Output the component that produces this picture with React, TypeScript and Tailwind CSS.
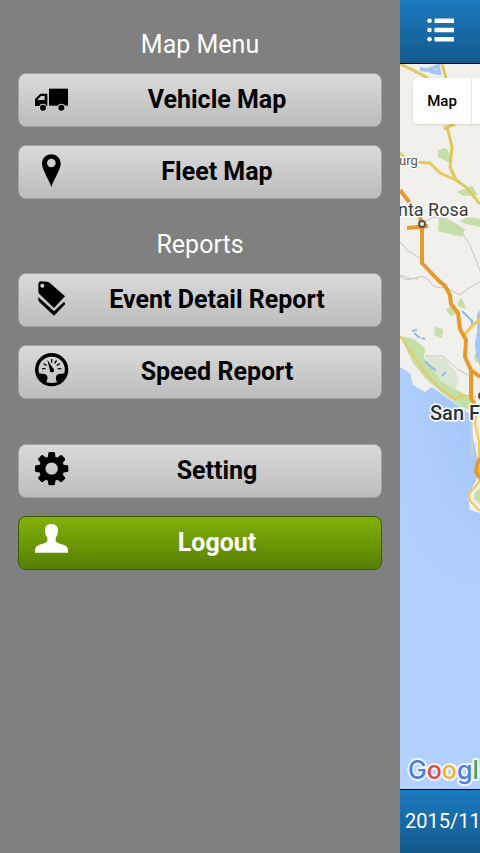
import React from 'react';

const GEAR_TEETH = [0, 45, 90, 135, 180, 225, 270, 315];
const GAUGE_TICKS = [-90, -58, 0, 30, 58, 90];

const TruckIcon = () => (
  <>
    <rect x="42" y="23" width="57" height="51" />
    <path fillRule="evenodd" d="M0 75V54L16 38H37V75ZM7 57L18 45H29V57Z" />
    <circle cx="24" cy="80" r="12" fill="#cbcbcb" />
    <circle cx="79" cy="80" r="12" fill="#cbcbcb" />
    <circle cx="24" cy="80" r="9" />
    <circle cx="79" cy="80" r="9" />
  </>
);

const PinIcon = () => (
  <path
    fillRule="evenodd"
    d="M49 4C33 4 21 16 21 32C21 49 40 76 49 102C58 76 77 49 77 32C77 16 65 4 49 4ZM49 17A13 13 0 1 1 49 43A13 13 0 1 1 49 17Z"
  />
);

const TagsIcon = () => (
  <>
    <path fillRule="evenodd" d="M10 10Q10 2 18 1L37 2Q41 2 44 5L90 46L57 81L13 39Q10 36 10 32ZM22 8A6 6 0 1 0 22 20A6 6 0 1 0 22 8Z" />
    <path d="M10 48L57 91L87 62L91 69L57 104L13 63Q10 60 10 56Z" />
  </>
);

const GaugeIcon = () => (
  <>
    <path fillRule="evenodd" d="M50 0A50 50 0 1 1 50 100A50 50 0 1 1 50 0ZM50 11A39 39 0 0 0 12 61Q20 63 29 63Q39 66 37 79L34 88Q50 92 66 88L63 79Q61 66 71 63Q80 63 88 61A39 39 0 0 0 50 11Z" />
    {GAUGE_TICKS.map((a) => (
      <rect key={a} x="48" y="18" width="4" height="11" rx="1" transform={`rotate(${a} 50 47)`} />
    ))}
    <path d="M37 20L45 53A6 6 0 0 0 57 50Z" />
    <circle cx="51" cy="52" r="6" />
  </>
);

const GearIcon = () => (
  <>
    <circle cx="50" cy="50" r="28" fill="none" stroke="currentColor" strokeWidth="19" />
    {GEAR_TEETH.map((a) => (
      <path key={a} d="M38 20L40 3Q41 0 44 0H56Q59 0 60 3L62 20Z" transform={`rotate(${a} 50 50)`} />
    ))}
  </>
);

const UserIcon = () => (
  <path d="M49 0C37 0 29 7 30 20C30 29 33 36 37 41V51C35 57 26 58 18 61C6 65 0 70 0 78V86H99V78C99 70 93 65 81 61C73 58 64 57 62 51V41C66 36 69 29 69 20C70 7 61 0 49 0Z" />
);

interface MenuButtonProps {
  label: string;
  icon: React.ReactNode;
  primary?: boolean;
}

const MenuButton = ({ label, icon, primary = false }: MenuButtonProps) => (
  <button
    type="button"
    className={`flex h-[54px] w-full items-center rounded-lg border px-4 ${
      primary
        ? 'border-[#3b5a06] bg-linear-to-b from-[#82b209] to-[#577f05] text-white'
        : 'border-[#a2a2a2] bg-linear-to-b from-[#dadada] to-[#bdbdbd] text-black'
    }`}
  >
    <svg viewBox="0 0 102 102" className="mb-1 size-[34px] shrink-0 overflow-visible" fill="currentColor" aria-hidden="true">
      {icon}
    </svg>
    <span className="flex-1 text-center text-[25px] leading-8 font-bold">{label}</span>
  </button>
);

const MapCanvas = () => (
  <svg
    viewBox="0 0 80 725"
    preserveAspectRatio="xMinYMin slice"
    className="absolute inset-0 size-full"
    fontFamily="Roboto, sans-serif"
    aria-label="Map"
  >
    <defs>
      <linearGradient id="sea" x1="0" y1="0" x2="1" y2="0">
        <stop offset="0" stopColor="#b0cffd" />
        <stop offset="1" stopColor="#a3c4fa" />
      </linearGradient>
      <linearGradient id="deep" x1="0" y1="0" x2="0" y2="1">
        <stop offset="0.45" stopColor="#b3d1ff" stopOpacity="0" />
        <stop offset="0.75" stopColor="#b3d1ff" />
      </linearGradient>
    </defs>
    <rect width="80" height="725" fill="url(#sea)" />
    <rect width="80" height="725" fill="url(#deep)" />

    {/* land */}
    <path d="M0 0H80V449L70 446L68 433L77 414V393L73 373L72 353L65 346L50 336L32 323L25 328L13 321L10 309L0 303Z" fill="#f2f0ec" />

    {/* parks */}
    <g fill="#c5dfa8">
      <path d="M0 272L14 275L25 284L24 294L38 312L56 325L70 334L76 349L60 342L42 329L26 315L13 299Z" />
      <path d="M38 86L46 84L52 94L50 99L38 93Z" />
      <path d="M39 153L55 159L65 165L62 173L38 167Z" />
      <path d="M56 128L72 122L78 131L64 132Z" />
      <path d="M60 157L68 153L80 155V163L66 160Z" />
      <path d="M35 263L43 265L42 274L34 271Z" />
      <path d="M46 245L52 242L57 250L50 252Z" />
      <path d="M58 237L62 234L66 245L58 242Z" />
      <path d="M74 290L80 292V299L75 298Z" />
      <path d="M75 428L80 424V440L74 435Z" />
    </g>
    <path d="M25 293L43 294L56 307L59 318L55 325L42 318Z" fill="#dbe5d3" />

    {/* water inland */}
    <path d="M77 250L80 246V302L76 291L75 280L77 268Z" fill="#a3c7f7" />
    <g fill="none" stroke="#8fb9ee" strokeWidth="2">
      <path d="M62 247L72 257V263" />
      <path d="M14 269L20 274M12 267L17 266M22 274L25 275" />
      <path d="M25 297L32 304L36 306M42 312L46 308" />
      <path d="M20 5L28 6L38 2L39 9L30 7" strokeWidth="4" stroke="#a5c5f3" />
    </g>

    {/* small roads */}
    <g fill="none" stroke="#c8c5c0" strokeWidth="1">
      <path d="M0 212Q5 218 15 214T30 218T45 223L60 231L69 224L80 218" />
      <path d="M0 178L8 187L20 194M0 211L8 214L18 215" />
      <path d="M24 158L34 153L48 155L60 166L70 181L80 207" />
      <path d="M25 292H42L52 300L59 306L70 312" />
    </g>

    {/* highways */}
    <g fill="none" strokeLinejoin="round">
      <path d="M0 0L13 6L28 14M42 0L46 14M55 60L45 64L48 66L52 83L50 103L56 116L66 123L80 140M28 14L45 60" stroke="#dfc85c" strokeWidth="3" />
      <path d="M0 89L10 98L30 99L40 109L56 116" stroke="#e5cb5a" strokeWidth="3" />
      <path d="M65 270L73 261L80 255" stroke="#f3c653" strokeWidth="3" />
      <path d="M0 272L13 291L25 309L40 324L55 335L63 331L76 333M77 349L75 360L79 377V418L69 430L70 437L80 447" stroke="#efc85f" strokeWidth="2" />
      <path d="M0 126L9 138L17 148L22 158V199L38 216L45 222L50 231L51 240L58 249L60 265L66 276L65 293L71 306L80 313M71 306V334L75 341M7 164L28 162M80 394L77 401L76 408L80 414" stroke="#e69a2d" strokeWidth="4" />
    </g>
    <path d="M72 354V396M75 365H80M75 380H80M77 388H80" stroke="#e8d69b" strokeWidth="1" />
    <circle cx="82" cy="332" r="4" fill="#4d4a45" />
    <circle cx="22" cy="160" r="3" fill="#ffffff" stroke="#555047" strokeWidth="2" />

    <g stroke="#ffffff" strokeWidth="3" strokeLinejoin="round" paintOrder="stroke">
      <text x="-1" y="101" fontSize="13" fill="#55524e">urg</text>
      <text x="-2" y="152" fontSize="18" fill="#3c3a38">nta Rosa</text>
      <text x="30" y="356" fontSize="20" fontWeight="500" fill="#27313f">San F</text>
    </g>
    <text x="8" y="715" fontSize="25" fontFamily="Inter, sans-serif" fontWeight="500" stroke="#eef4ff" strokeWidth="4" strokeLinejoin="round" paintOrder="stroke">
      <tspan fill="#4a7fdc">G</tspan>
      <tspan fill="#dd4b3e">o</tspan>
      <tspan fill="#efb52c">o</tspan>
      <tspan fill="#4a7fdc">g</tspan>
      <tspan fill="#3da45b">l</tspan>
      <tspan fill="#dd4b3e">e</tspan>
    </text>
  </svg>
);

export default function App() {
  return (
    <div className="flex min-h-screen bg-[#808080] font-['Roboto',sans-serif]">
      {/* side menu */}
      <nav className="w-5/6 shrink-0 px-[18px] pt-[27px]">
        <h2 className="mb-[10px] text-center text-[25px] leading-9 text-white">Map Menu</h2>
        <div className="flex flex-col gap-[18px]">
          <MenuButton label="Vehicle Map" icon={<TruckIcon />} />
          <MenuButton label="Fleet Map" icon={<PinIcon />} />
        </div>

        <h2 className="mt-7 mb-[10px] text-center text-[25px] leading-9 text-white">Reports</h2>
        <div className="flex flex-col gap-[18px]">
          <MenuButton label="Event Detail Report" icon={<TagsIcon />} />
          <MenuButton label="Speed Report" icon={<GaugeIcon />} />
        </div>

        <div className="mt-[45px] flex flex-col gap-[18px]">
          <MenuButton label="Setting" icon={<GearIcon />} />
          <MenuButton label="Logout" icon={<UserIcon />} primary />
        </div>
      </nav>

      {/* page behind the menu */}
      <main className="flex min-w-0 flex-1 flex-col overflow-hidden">
        <header className="flex h-16 shrink-0 items-center border-b border-black bg-linear-to-b from-[#1b7abf] to-[#145a8c] pb-1 pl-[27px]">
          <button type="button" aria-label="Menu" className="text-white">
            <svg viewBox="0 0 27 24" className="h-6 w-[27px]" fill="currentColor" aria-hidden="true">
              <circle cx="2.5" cy="2.8" r="2.3" />
              <circle cx="2.5" cy="12" r="2.3" />
              <circle cx="2.5" cy="21.2" r="2.3" />
              <path d="M7.5 .6H27V5H7.5ZM7.5 9.8H27V14.2H7.5ZM7.5 19H27V23.4H7.5Z" />
            </svg>
          </button>
        </header>

        <div className="relative flex-1 overflow-hidden">
          <MapCanvas />
          <div className="absolute top-[14px] left-[13px] flex h-[46px] rounded-sm bg-white shadow">
            <button type="button" className="w-[59px] border-r border-[#e4e4e4] text-[15px] font-medium text-black">
              Map
            </button>
            <div className="w-20" />
          </div>
        </div>

        <footer className="h-16 shrink-0 border-t border-black bg-linear-to-b from-[#1b7abf] to-[#145a8c] pl-[5px] text-xl leading-[62px] whitespace-nowrap text-white">
          2015/11
        </footer>
      </main>
    </div>
  );
}
